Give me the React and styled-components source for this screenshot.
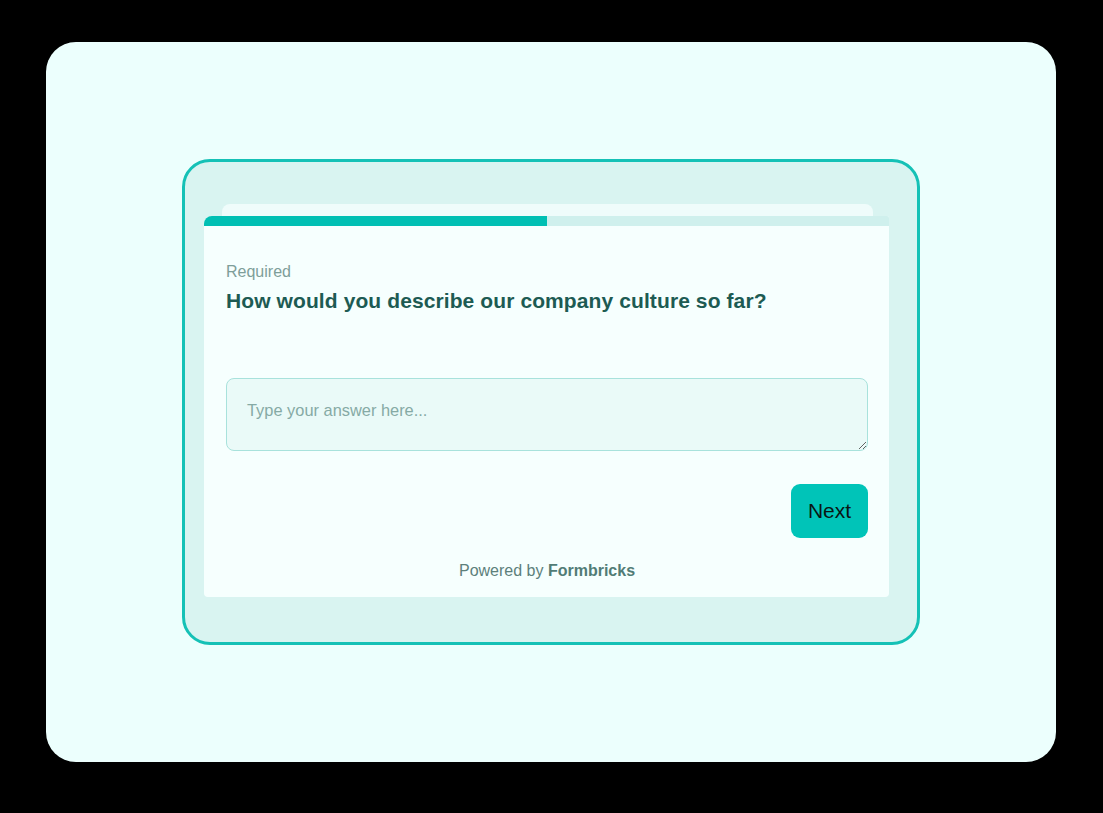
import styled, { createGlobalStyle } from "styled-components";

const Global = createGlobalStyle`
  html, body {
    margin: 0;
    padding: 0;
    background: #000;
  }
  body {
    font-family: "Liberation Sans", Arial, sans-serif;
  }
`;

const Page = styled.div`
  width: 1103px;
  height: 813px;
  background: #000;
  padding: 42px 47px 51px 46px;
  box-sizing: border-box;
`;

const Screen = styled.div`
  width: 100%;
  height: 100%;
  background: #ecfffd;
  border-radius: 30px;
  display: flex;
  align-items: center;
  justify-content: center;
`;

const Frame = styled.div`
  width: 738px;
  height: 486px;
  box-sizing: border-box;
  border: 3px solid #15c1b6;
  border-radius: 28px;
  background: #d9f4f1;
  padding: 42px 28px 45px 19px;
  display: flex;
  flex-direction: column;
`;

const BackCard = styled.div`
  height: 12px;
  margin: 0 16px 0 18px;
  background: #effcfb;
  border-radius: 8px 8px 0 0;
`;

const Card = styled.div`
  flex: 1;
  background: #f6fffe;
  border-radius: 8px 2px 4px 4px;
  overflow: hidden;
  display: flex;
  flex-direction: column;
`;

const Progress = styled.div`
  height: 10px;
  background: #cff0ed;
  flex-shrink: 0;
`;

const ProgressFill = styled.div`
  height: 100%;
  background: #00bfb3;
`;

const Body = styled.div`
  padding: 37px 21px 18px 22px;
  display: flex;
  flex-direction: column;
`;

const Label = styled.div`
  font-size: 16px;
  line-height: 18px;
  color: #7e9e99;
`;

const Question = styled.h2`
  margin: 8px 0 0;
  font-size: 21px;
  line-height: 24px;
  font-weight: 700;
  letter-spacing: 0.1px;
  color: #1d5b53;
`;

const Answer = styled.textarea`
  margin-top: 65px;
  height: 73px;
  box-sizing: border-box;
  border: 1px solid #a8e2dc;
  border-radius: 8px;
  background: #eafaf8;
  padding: 22px 20px;
  font-family: "Liberation Sans", Arial, sans-serif;
  font-size: 16.4px;
  color: #1d5b53;
  outline: none;
  &::placeholder {
    color: #86aaa5;
  }
`;

const Actions = styled.div`
  margin-top: 33px;
  display: flex;
  justify-content: flex-end;
`;

const NextButton = styled.button`
  width: 77px;
  height: 54px;
  border: none;
  border-radius: 9px;
  background: #00c4b8;
  color: #0a1614;
  font-family: "Liberation Sans", Arial, sans-serif;
  font-size: 21px;
  cursor: pointer;
`;

const Footer = styled.div`
  margin-top: 24px;
  text-align: center;
  font-size: 16px;
  line-height: 18px;
  color: #5d807b;
  b {
    color: #517c76;
  }
`;

export default function App() {
  const progress = 50;
  return (
    <>
      <Global />
      <Page>
        <Screen>
          <Frame>
            <BackCard />
            <Card>
              <Progress>
                <ProgressFill style={{ width: `${progress}%` }} />
              </Progress>
              <Body>
                <Label>Required</Label>
                <Question>How would you describe our company culture so far?</Question>
                <Answer placeholder="Type your answer here..." />
                <Actions>
                  <NextButton>Next</NextButton>
                </Actions>
                <Footer>
                  Powered by <b>Formbricks</b>
                </Footer>
              </Body>
            </Card>
          </Frame>
        </Screen>
      </Page>
    </>
  );
}
